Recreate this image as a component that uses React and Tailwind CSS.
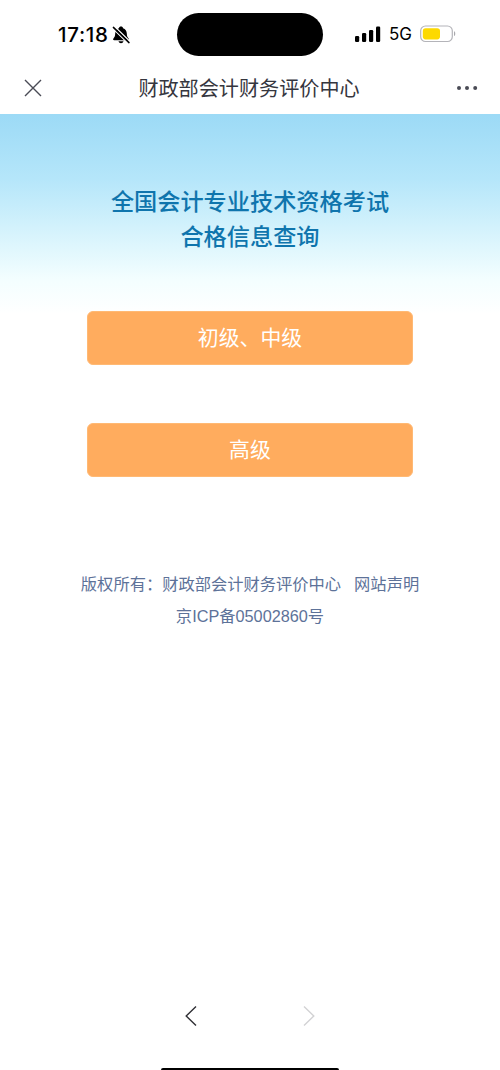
const cjk = "font-['Liberation_Sans','Noto_Sans_CJK_SC',sans-serif]";

function MutedBell() {
  return (
    <svg width="20" height="20" viewBox="0 0 20 20" className="ml-[2px] mt-px">
      <path
        d="M10 1.6c-1.2 0-1.9.7-2.1 1.7-2.3.8-3.6 2.7-3.7 5.3-.1 2.6-.6 3.6-1.6 4.6-.9.9-.6 2 .6 2h13.6c1.200 0 1.500-1.100.6-2-1-1-1.500-2-1.600-4.600-.1-2.600-1.400-4.500-3.700-5.300-.2-1-.9-1.700-2.100-1.700Z"
        fill="#000"
      />
      <path d="M7.500 16.300h5c-.3 1.300-1.300 2-2.500 2s-2.200-.7-2.500-2Z" fill="#000" />
      <path d="M1.600 3.400 17 18.300M3.600 1.400 19.200 16.700" stroke="#fff" strokeWidth="1.300" />
      <path d="M2.400 2.400 18 17.600" stroke="#000" strokeWidth="1.500" strokeLinecap="round" />
    </svg>
  );
}

function Signal() {
  return (
    <svg width="26" height="17" viewBox="0 0 26 17">
      <rect x="0" y="10" width="4.200" height="6" rx="1.200" />
      <rect x="7" y="7" width="4.200" height="9" rx="1.200" />
      <rect x="14" y="4" width="4.200" height="12" rx="1.200" />
      <rect x="21" y="0.500" width="4.200" height="15.500" rx="1.200" />
    </svg>
  );
}

function Battery() {
  return (
    <svg width="36" height="18" viewBox="0 0 36 18">
      <rect x="0.700" y="1" width="31.600" height="15.500" rx="4.800" fill="#fff" stroke="#b4b4b9" strokeWidth="1.200" />
      <rect x="2.800" y="3.200" width="17.200" height="11.200" rx="2.800" fill="#fdd900" />
      <path d="M34 6.300c1.700.5 1.700 4.300 0 4.800Z" fill="#a9a9ad" />
    </svg>
  );
}

function StatusBar() {
  return (
    <header className="flex h-[62px] items-start">
      <div className="flex w-[177px] items-center pl-[58px] pt-[23px]">
        <span className="w-[51px] font-['Inter',sans-serif] text-[20.500px] font-medium leading-[23px] tracking-[0.7px] text-black">17:18</span>
        <MutedBell />
      </div>
      <div className="mt-[13px] h-[43px] w-[146px] rounded-full bg-black" />
      <div className="flex items-center pl-8 pt-[24px]">
        <Signal />
        <span className="ml-[8px] w-[23px] font-['Inter',sans-serif] text-[17px] leading-[20px] tracking-[-0.2px] text-black">5G</span>
        <span className="ml-[8px]"><Battery /></span>
      </div>
    </header>
  );
}

function NavBar() {
  return (
    <nav className="flex h-[52px] items-center justify-between pl-6 pr-[22px] text-[#4a4b55]">
      <svg width="18" height="18" viewBox="0 0 18 18" fill="none" stroke="currentColor" strokeWidth="1.400">
        <path d="M1 1 17 17M17 1 1 17" />
      </svg>
      <h1 className="pt-[2px] text-[20.130px] leading-[28px] text-[#35363e]">财政部会计财务评价中心</h1>
      <svg width="22" height="6" viewBox="0 0 22 6" fill="currentColor">
        <circle cx="3" cy="3" r="2" />
        <circle cx="11" cy="3" r="2" />
        <circle cx="19.200" cy="3" r="2" />
      </svg>
    </nav>
  );
}

function LevelButton({ children }) {
  return (
    <button className="h-[54px] w-[326px] rounded-[6px] border border-[#ffb974] bg-[#ffac5e] text-[20.900px] leading-[30px] text-white">
      {children}
    </button>
  );
}

export default function App() {
  return (
    <div className={`flex h-[1070px] w-[500px] flex-col overflow-hidden bg-white ${cjk}`}>
      <StatusBar />
      <NavBar />
      <main className="flex flex-1 flex-col items-center bg-[linear-gradient(180deg,#9cdaf6_0px,#b5e6fa_65px,#e0f7fd_135px,#f3feff_165px,#ffffff_200px)] pt-[71px]">
        <h2 className="text-center text-[23.200px] font-medium leading-[35px] text-[#0f75ad]">
          全国会计专业技术资格考试
          <br />
          合格信息查询
        </h2>
        <div className="mt-[56px] flex flex-col gap-[58px]">
          <LevelButton>初级、中级</LevelButton>
          <LevelButton>高级</LevelButton>
        </div>
        <footer className="mt-[91px] text-center text-[16.280px] leading-[32px] text-[#5d7299]">
          <p className="flex justify-center">
            <span>版权所有：财政部会计财务评价中心</span>
            <span className="ml-[13px]">网站声明</span>
          </p>
          <p>京ICP备05002860号</p>
        </footer>
      </main>
      <div className="flex h-[62px] justify-center gap-[106px]">
        <svg width="12" height="20" viewBox="0 0 12 20" fill="none" stroke="#303035" strokeWidth="1.400">
          <path d="M11 .6 1.200 10 11 19.400" />
        </svg>
        <svg width="12" height="20" viewBox="0 0 12 20" fill="none" stroke="#d2d2d4" strokeWidth="1.400">
          <path d="M1 .6 10.800 10 1 19.400" />
        </svg>
      </div>
      <div className="h-[2px] w-[178px] self-center rounded-t-full bg-black" />
    </div>
  );
}
